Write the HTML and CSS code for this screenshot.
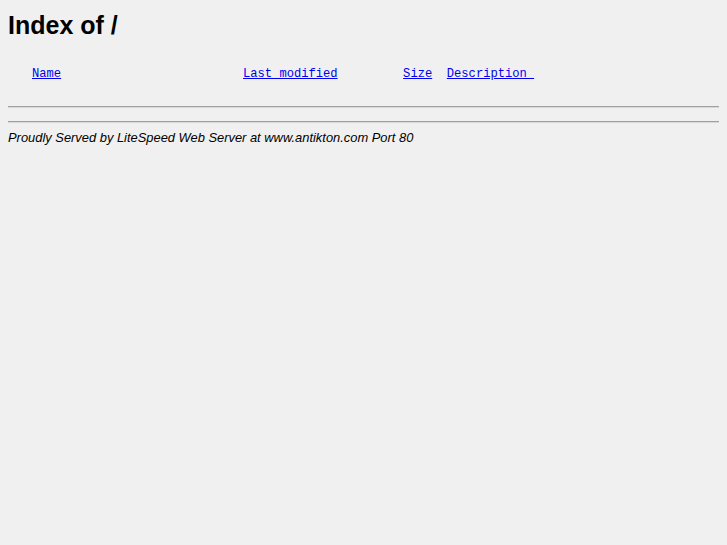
FILE: index.html
```html
<!DOCTYPE html>
<html lang="en">

<head>
    <meta charset="UTF-8">
    <title>Index of /</title>
    <link rel="stylesheet" href="styles.css">
</head>

<body>
    <h1>Index of /</h1>
    <pre class="listing"><a href="#">Name</a>                         <a href="#">Last modified</a>         <a href="#">Size</a>  <a href="#">Description </a>
<hr></pre>
    <hr>
    <address>Proudly Served by LiteSpeed Web Server at www.antikton.com Port 80</address>
</body>

</html>
```

FILE: styles.css
```css
body {
    margin: 8px;
    background: #f0f0f0;
    color: #000;
    font-family: "Liberation Sans", Arial, sans-serif;
}

h1 {
    margin: 0;
    padding-top: 2px;
    font-size: 25px;
    line-height: 30px;
    font-weight: bold;
}

a {
    color: #0000ee;
}

/* listing in monospace, columns by spaces */
.listing {
    margin: 27px 0 0;
    padding-left: 24px;
    font-family: "Liberation Mono", "Courier New", monospace;
    font-size: 12.13px;
    line-height: 14px;
}

.listing hr {
    margin: 25px 0 0 -24px;
}

hr {
    margin: 13px 0 0;
    border: 0;
    border-top: 1px solid #a0a0a0;
    border-bottom: 1px solid #d8d8d8;
    height: 0;
}

address {
    margin-top: 7px;
    font-size: 12.9px;
    font-style: italic;
}
```
